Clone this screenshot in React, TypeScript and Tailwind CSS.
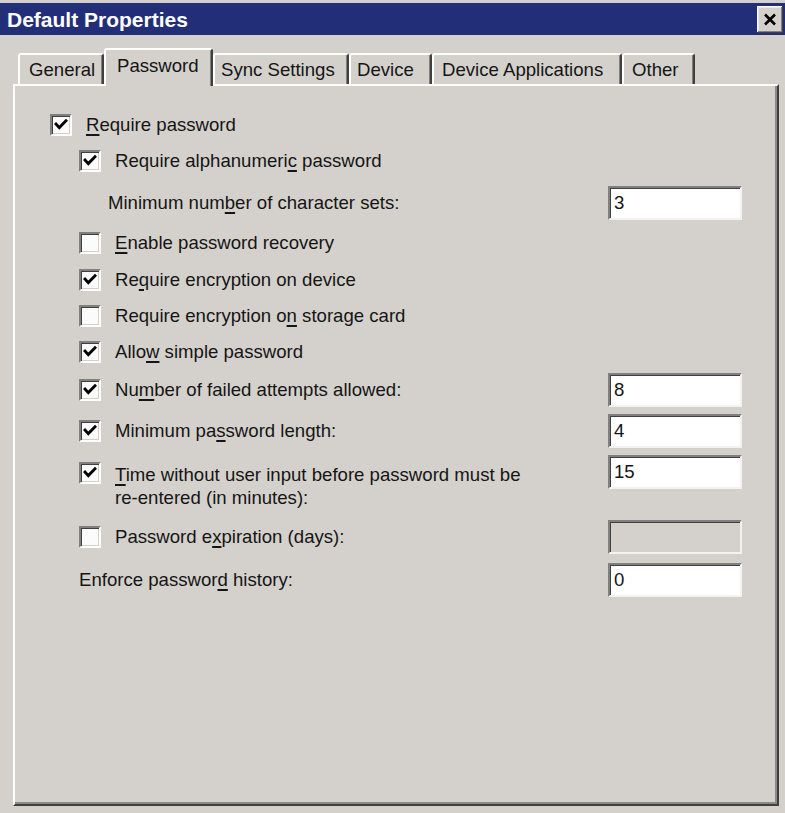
import React from "react";

const U = ({ children }: { children: React.ReactNode }) => (
  <span className="underline decoration-[1.5px] underline-offset-[3px]">{children}</span>
);

function Check({ checked }: { checked?: boolean }) {
  return (
    <span className="w-[22px] h-[22px] shrink-0 border-2 border-t-[#808080] border-l-[#808080] border-b-white border-r-white bg-[#fbfbfb] shadow-[inset_1px_1px_0_#404040,inset_-1px_-1px_0_#d4d0c8] flex items-center justify-center">
      {checked && (
        <svg width="14" height="14" viewBox="0 0 14 14">
          <path d="M2 6 L5.3 9.6 L12 2.8" fill="none" stroke="#000" strokeWidth="2.8" strokeLinecap="square" />
        </svg>
      )}
    </span>
  );
}

function Field({ value, disabled }: { value?: string; disabled?: boolean }) {
  return (
    <div
      className={
        disabled
          ? "ml-auto w-[134px] h-[34px] shrink-0 border-2 border-t-[#808080] border-l-[#808080] border-b-[#f2f2f2] border-r-[#f2f2f2] shadow-[inset_1px_1px_0_#404040] bg-[#d4d1cc]"
          : "ml-auto w-[134px] h-[34px] shrink-0 border-2 border-t-[#808080] border-l-[#808080] border-b-[#f2f2f2] border-r-[#f2f2f2] shadow-[inset_1px_1px_0_#404040] bg-white flex items-center pl-[4px]"
      }
    >
      {value}
    </div>
  );
}

function Tab({ label, w, pl, selected }: { label: string; w: string; pl: string; selected?: boolean }) {
  if (selected) {
    return (
      <div
        className={`${w} ${pl} relative z-10 h-[38px] -mb-[2px] bg-[#d4d1cc] border-t-2 border-l-2 border-t-white border-l-white border-r-2 border-r-[#404040] shadow-[inset_-1px_0_0_#808080] rounded-t-[3px] flex items-center pb-[4px]`}
      >
        {label}
      </div>
    );
  }
  return (
    <div
      className={`${w} ${pl} h-[31px] bg-[#d4d1cc] border-t-2 border-l-2 border-t-white border-l-white border-r-2 border-r-[#404040] shadow-[inset_-1px_0_0_#808080] rounded-t-[3px] flex items-center pt-[1px]`}
    >
      {label}
    </div>
  );
}

export default function App() {
  return (
    <div className="w-[785px] h-[813px] bg-[#d4d1cc] overflow-hidden font-['Liberation_Sans',Arial,sans-serif] text-[18.6px] text-[#151515]">
      {/* title bar */}
      <div className="mt-[3px] h-[32px] bg-[#232e78] flex items-center justify-between pl-[7px] pr-[2px]">
        <span className="text-white font-bold text-[21px] leading-none">Default Properties</span>
        <div className="w-[26px] h-[27px] bg-[#d4d1cc] shadow-[inset_-1px_-1px_0_#404040,inset_1px_1px_0_#ffffff,inset_-2px_-2px_0_#808080,inset_2px_2px_0_#e8e8e8] flex items-center justify-center">
          <svg width="14" height="13" viewBox="0 0 14 13">
            <path d="M2 1.5 L12 11.5 M12 1.5 L2 11.5" stroke="#000" strokeWidth="2.6" fill="none" />
          </svg>
        </div>
      </div>

      {/* tabs */}
      <div className="mt-[13px] h-[36px] pl-[18px] flex items-end relative z-10">
        <Tab label="General" w="w-[86px]" pl="pl-[9px]" />
        <Tab label="Password" w="w-[109px]" pl="pl-[11px]" selected />
        <Tab label="Sync Settings" w="w-[136px]" pl="pl-[6px]" />
        <Tab label="Device" w="w-[83px]" pl="pl-[6px]" />
        <Tab label="Device Applications" w="w-[190px]" pl="pl-[8px]" />
        <Tab label="Other" w="w-[73px]" pl="pl-[8px]" />
      </div>

      {/* panel */}
      <div className="ml-[13px] w-[766px] h-[722px] border-2 border-t-white border-l-white border-r-[#404040] border-b-[#404040] shadow-[inset_-2px_-2px_0_#8a8a8a] pt-[22px] pl-[35px] pr-[35px]">
        <div className="flex items-center h-[34px]">
          <Check checked />
          <span className="ml-[14px]">
            <U>R</U>equire password
          </span>
        </div>

        <div className="flex items-center h-[34px] mt-[2px] pl-[29px]">
          <Check checked />
          <span className="ml-[14px]">
            Require alphanumeri<U>c</U> password
          </span>
        </div>

        <div className="flex items-center h-[34px] mt-[8px] pl-[58px]">
          <span>
            Minimum num<U>b</U>er of character sets:
          </span>
          <Field value="3" />
        </div>

        <div className="flex items-center h-[34px] mt-[6px] pl-[29px]">
          <Check />
          <span className="ml-[14px]">
            <U>E</U>nable password recovery
          </span>
        </div>

        <div className="flex items-center h-[34px] mt-[3px] pl-[29px]">
          <Check checked />
          <span className="ml-[14px]">
            Re<U>q</U>uire encryption on device
          </span>
        </div>

        <div className="flex items-center h-[34px] mt-[2px] pl-[29px]">
          <Check />
          <span className="ml-[14px]">
            Require encryption o<U>n</U> storage card
          </span>
        </div>

        <div className="flex items-center h-[34px] mt-[2px] pl-[29px]">
          <Check checked />
          <span className="ml-[14px]">
            Allo<U>w</U> simple password
          </span>
        </div>

        <div className="flex items-center h-[34px] mt-[4px] pl-[29px]">
          <Check checked />
          <span className="ml-[14px]">
            Nu<U>m</U>ber of failed attempts allowed:
          </span>
          <Field value="8" />
        </div>

        <div className="flex items-center h-[34px] mt-[7px] pl-[29px]">
          <Check checked />
          <span className="ml-[14px]">
            Minimum pa<U>s</U>sword length:
          </span>
          <Field value="4" />
        </div>

        <div className="flex items-start h-[50px] mt-[7px] pl-[29px]">
          <span className="mt-[7px]">
            <Check checked />
          </span>
          <span className="ml-[14px] mt-[8px] leading-[23px]">
            <U>T</U>ime without user input before password must be
            <br />
            re-entered (in minutes):
          </span>
          <Field value="15" />
        </div>

        <div className="flex items-center h-[34px] mt-[15px] pl-[29px]">
          <Check />
          <span className="ml-[14px]">
            Password e<U>x</U>piration (days):
          </span>
          <Field disabled />
        </div>

        <div className="flex items-center h-[34px] mt-[9px] pl-[29px]">
          <span>
            Enforce passwor<U>d</U> history:
          </span>
          <Field value="0" />
        </div>
      </div>
    </div>
  );
}
